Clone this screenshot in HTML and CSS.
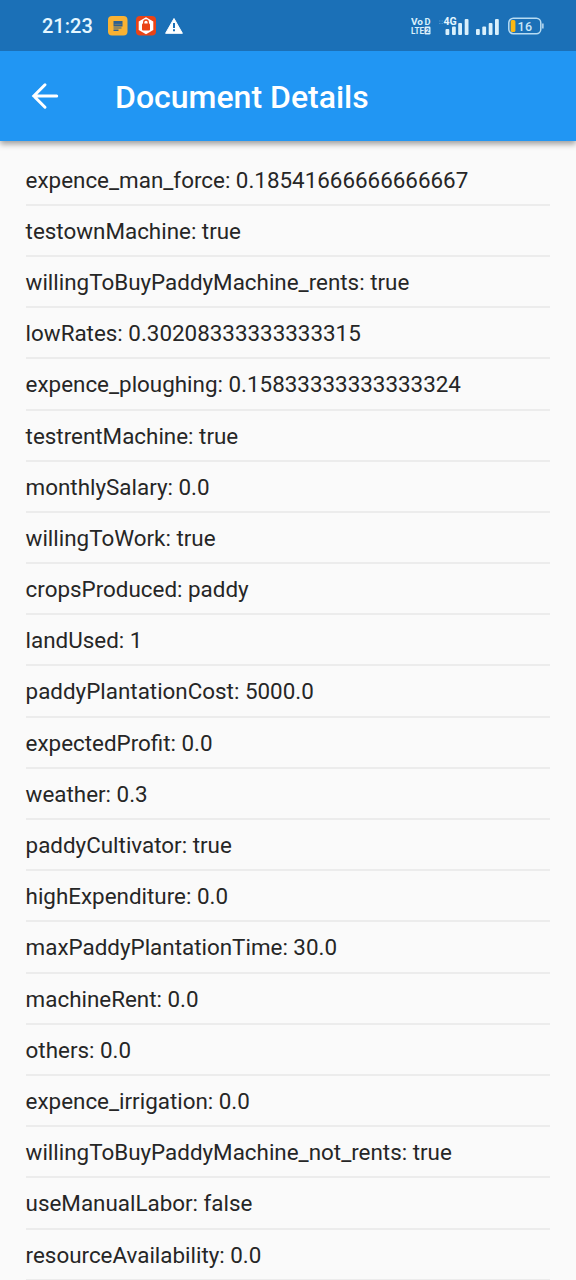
FILE: index.html
```html
<!DOCTYPE html>
<html lang="en">
<head>
<meta charset="utf-8">
<title>Document Details</title>
<link rel="stylesheet" href="styles.css">
</head>
<body>
<header class="top">
  <div class="status">
    <span class="clock">21:23</span>
    <svg class="notifications" width="76" height="20" viewBox="0 0 76 20">
      <rect x="0" y="0" width="19.5" height="19.5" rx="4" fill="#f9b233"/>
      <path d="M5.500 5h9v5.500h-9zM5.500 11.500h8v1h-8zM5.500 13.500h5v1.500h-5z" fill="#2d5f91"/>
      <path d="M6.500 8.300h7" stroke="#8c8463" stroke-width=".8"/>
      <rect x="28" y="0" width="20" height="19.500" rx="4" fill="#ea4316"/>
      <path d="M38 1.200l7.300 4.200v8.600L38 18.300 30.700 14V5.400z" fill="#fff"/>
      <path d="M35.700 8V6.300a2.300 2.300 0 0 1 4.600 0V8" fill="none" stroke="#ea4316" stroke-width="1.300"/>
      <rect x="34" y="7.500" width="8" height="7" rx="1" fill="#ea4316"/>
      <path d="M66 2.500l8.400 14.800H57.600z" fill="#fff" stroke="#fff" stroke-width="1" stroke-linejoin="round"/>
      <path d="M66 7v5M66 13.300v2" stroke="#1b70b7" stroke-width="2"/>
    </svg>
    <svg class="volte" width="21" height="20" viewBox="0 0 21 20">
      <text x="0" y="8.500" textLength="12" lengthAdjust="spacingAndGlyphs">Vo</text>
      <text x="13.500" y="8.500" textLength="6" lengthAdjust="spacingAndGlyphs">D</text>
      <text x="0" y="18" textLength="13" lengthAdjust="spacingAndGlyphs">LTE</text>
      <rect x="13.500" y="10.500" width="6" height="8" rx="1.200" fill="#d9f0fc"/>
      <text class="sim" x="14.700" y="17">2</text>
    </svg>
    <svg class="network" width="62" height="20" viewBox="0 0 62 20">
      <path d="M1 5h4M1 7.500h4" stroke="#4a91cb" stroke-width="1.200" stroke-dasharray="1.500 1"/>
      <g fill="#d9f0fc">
        <rect x="7.500" y="13" width="3.800" height="6" rx="1"/>
        <rect x="14" y="10.500" width="3.800" height="8.500" rx="1"/>
        <rect x="20.200" y="7" width="3.800" height="12" rx="1"/>
        <rect x="26.700" y="3" width="3.800" height="16" rx="1"/>
        <rect x="38" y="13" width="3.800" height="6" rx="1"/>
        <rect x="44.300" y="10.500" width="3.800" height="8.500" rx="1"/>
        <rect x="50.700" y="7" width="3.800" height="12" rx="1"/>
        <rect x="57" y="3" width="3.800" height="16" rx="1"/>
      </g>
      <text class="generation" x="5.500" y="9.300">4G</text>
    </svg>
    <svg class="battery" width="38" height="18" viewBox="0 0 38 18">
      <rect x=".8" y="1.300" width="32" height="15.400" rx="4.500" fill="none" stroke="#b7dcf3" stroke-width="1.500"/>
      <path d="M34.800 6.500v5" stroke="#a8cdea" stroke-width="1.800"/>
      <rect x="2.700" y="3" width="4.700" height="12" rx="1.500" fill="#fdb813"/>
      <text class="level" x="9.500" y="13.500">16</text>
    </svg>
  </div>
  <div class="appbar">
    <svg class="back" width="28" height="28" viewBox="0 0 28 28">
      <path d="M25.700 14H3M14 2.800L2.800 14 14 25.200" fill="none" stroke="#fff" stroke-width="3" stroke-linecap="round"/>
    </svg>
    <h1 class="title">Document Details</h1>
  </div>
</header>
<main class="fields">
  <div class="field">expence_man_force: 0.18541666666666667</div>
  <div class="field">testownMachine: true</div>
  <div class="field">willingToBuyPaddyMachine_rents: true</div>
  <div class="field">lowRates: 0.30208333333333315</div>
  <div class="field">expence_ploughing: 0.15833333333333324</div>
  <div class="field">testrentMachine: true</div>
  <div class="field">monthlySalary: 0.0</div>
  <div class="field">willingToWork: true</div>
  <div class="field">cropsProduced: paddy</div>
  <div class="field">landUsed: 1</div>
  <div class="field">paddyPlantationCost: 5000.0</div>
  <div class="field">expectedProfit: 0.0</div>
  <div class="field">weather: 0.3</div>
  <div class="field">paddyCultivator: true</div>
  <div class="field">highExpenditure: 0.0</div>
  <div class="field">maxPaddyPlantationTime: 30.0</div>
  <div class="field">machineRent: 0.0</div>
  <div class="field">others: 0.0</div>
  <div class="field">expence_irrigation: 0.0</div>
  <div class="field">willingToBuyPaddyMachine_not_rents: true</div>
  <div class="field">useManualLabor: false</div>
  <div class="field">resourceAvailability: 0.0</div>
</main>
</body>
</html>
```
FILE: styles.css
```css
* { box-sizing: border-box; }
body {
  margin: 0;
  height: 1280px;
  overflow: hidden;
  background: #fafafa;
  color: #262626;
  font-family: Roboto, "Liberation Sans", sans-serif;
}
.top {
  position: relative;
  height: 141px;
  background: #2196f3;
  box-shadow: 0 3px 6px rgba(0, 0, 0, .38);
}
.status {
  display: flex;
  align-items: center;
  height: 51px;
  padding: 0 32px 0 42px;
  background: #1b70b7;
}
.clock {
  width: 66px;
  padding-top: 1px;
  color: #e6f7ff;
  font: 500 20px/24px Roboto, sans-serif;
}
.volte {
  margin-left: auto;
  margin-right: 6px;
  fill: #d9f0fc;
  font: 700 9.800px Roboto, sans-serif;
}
.sim { fill: #1b70b7; font: 700 6.500px Roboto, sans-serif; }
.generation { fill: #e6f7ff; font: 700 10.500px Roboto, sans-serif; }
.battery { margin-left: 8px; margin-right: -2px; }
.level { fill: #c9e7f9; font: 500 12.500px Roboto, sans-serif; letter-spacing: .5px; }
.appbar {
  display: flex;
  align-items: center;
  height: 90px;
  padding-left: 31px;
}
.back { margin-right: 56px; }
.title {
  margin: 0;
  padding-top: 1px;
  color: #fff;
  font-size: 32px;
  font-weight: 500;
  line-height: 40px;
}
.fields { padding: 13.600px 25.600px 0; }
.field {
  height: 51.200px;
  border-bottom: 2px solid #ececec;
  font-size: 22.400px;
  line-height: 50.400px;
  white-space: nowrap;
}
```
